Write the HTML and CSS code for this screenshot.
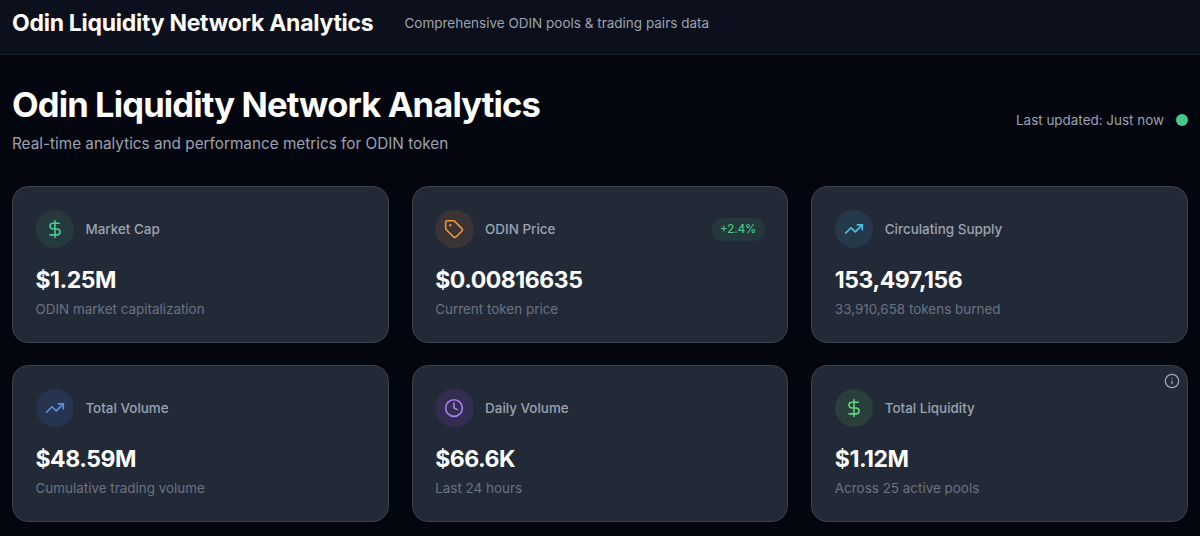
FILE: index.html
```html
<!DOCTYPE html>
<html lang="en">
<head>
    <meta charset="UTF-8">
    <title>Odin Liquidity Network Analytics</title>
    <link rel="stylesheet" href="styles.css">
</head>
<body>
    <header class="topbar">
        <div class="topbar-title">Odin Liquidity Network Analytics</div>
        <div class="topbar-sub">Comprehensive ODIN pools &amp; trading pairs data</div>
    </header>
    <main class="content">
        <div class="page-head">
            <div>
                <h1>Odin Liquidity Network Analytics</h1>
                <p class="lead">Real-time analytics and performance metrics for ODIN token</p>
            </div>
            <div class="status">
                <span>Last updated: Just now</span>
                <span class="status-dot"></span>
            </div>
        </div>
        <div class="cards">
            <div class="card">
                <div class="card-head">
                    <div class="icon icon-green">
                        <svg viewBox="0 0 24 24"><path d="M12 2v20"/><path d="M17 5H9.5a3.5 3.5 0 0 0 0 7h5a3.5 3.5 0 0 1 0 7H6"/></svg>
                    </div>
                    <div class="card-title">Market Cap</div>
                </div>
                <div class="value">$1.25M</div>
                <div class="note">ODIN market capitalization</div>
            </div>
            <div class="card">
                <div class="card-head">
                    <div class="icon icon-orange">
                        <svg viewBox="0 0 24 24"><path d="M12.586 2.586A2 2 0 0 0 11.172 2H4a2 2 0 0 0-2 2v7.172a2 2 0 0 0 .586 1.414l8.704 8.704a2.426 2.426 0 0 0 3.42 0l6.58-6.58a2.426 2.426 0 0 0 0-3.42z"/><circle cx="7.5" cy="7.5" r=".5"/></svg>
                    </div>
                    <div class="card-title">ODIN Price</div>
                    <div class="badge">+2.4%</div>
                </div>
                <div class="value">$0.00816635</div>
                <div class="note">Current token price</div>
            </div>
            <div class="card">
                <div class="card-head">
                    <div class="icon icon-cyan">
                        <svg viewBox="0 0 24 24"><path d="M22 7 13.5 15.5 8.5 10.5 2 17"/><path d="M16 7h6v6"/></svg>
                    </div>
                    <div class="card-title">Circulating Supply</div>
                </div>
                <div class="value">153,497,156</div>
                <div class="note">33,910,658 tokens burned</div>
            </div>
            <div class="card">
                <div class="card-head">
                    <div class="icon icon-blue">
                        <svg viewBox="0 0 24 24"><path d="M22 7 13.5 15.5 8.5 10.5 2 17"/><path d="M16 7h6v6"/></svg>
                    </div>
                    <div class="card-title">Total Volume</div>
                </div>
                <div class="value">$48.59M</div>
                <div class="note">Cumulative trading volume</div>
            </div>
            <div class="card">
                <div class="card-head">
                    <div class="icon icon-purple">
                        <svg viewBox="0 0 24 24"><circle cx="12" cy="12" r="10"/><path d="M12 6v6l4 2"/></svg>
                    </div>
                    <div class="card-title">Daily Volume</div>
                </div>
                <div class="value">$66.6K</div>
                <div class="note">Last 24 hours</div>
            </div>
            <div class="card">
                <svg class="info" viewBox="0 0 24 24"><circle cx="12" cy="12" r="10"/><path d="M12 16v-4"/><path d="M12 8h.01"/></svg>
                <div class="card-head">
                    <div class="icon icon-lime">
                        <svg viewBox="0 0 24 24"><path d="M12 2v20"/><path d="M17 5H9.5a3.5 3.5 0 0 0 0 7h5a3.5 3.5 0 0 1 0 7H6"/></svg>
                    </div>
                    <div class="card-title">Total Liquidity</div>
                </div>
                <div class="value">$1.12M</div>
                <div class="note">Across 25 active pools</div>
            </div>
        </div>
    </main>
</body>
</html>
```

FILE: styles.css
```css
html, body {
    margin: 0;
    padding: 0;
}
body {
    height: 536px;
    overflow: hidden;
    background-color: #03050f;
    color: #fff;
    font-family: Inter, "Liberation Sans", sans-serif;
}
.topbar {
    box-sizing: border-box;
    display: flex;
    align-items: center;
    gap: 31px;
    height: 55px;
    padding: 0 12px 9px;
    background-color: #0c101c;
    border-bottom: 1px solid #1c212d;
}
.topbar-title {
    font-size: 23px;
    font-weight: 700;
    letter-spacing: -0.27px;
}
.topbar-sub {
    font-size: 13.5px;
    color: #9ca3af;
}
.content {
    padding: 31px 12px 0;
}
.page-head {
    display: flex;
    justify-content: space-between;
    align-items: center;
    margin-bottom: 31px;
}
h1 {
    margin: 0 0 8px;
    font-size: 34.56px;
    line-height: 38px;
    font-weight: 700;
    letter-spacing: -0.87px;
}
.lead {
    margin: 0;
    font-size: 15.3px;
    line-height: 23px;
    color: #9ca3af;
}
.status {
    display: flex;
    align-items: center;
    gap: 12px;
    padding-bottom: 1px;
    font-size: 13.44px;
    color: #9ca3af;
}
.status-dot {
    width: 12px;
    height: 12px;
    border-radius: 50%;
    background-color: #48c78a;
}
.cards {
    display: grid;
    grid-template-columns: repeat(3, 1fr);
    gap: 22px 23px;
}
.card {
    position: relative;
    box-sizing: border-box;
    height: 157px;
    padding: 23px 22.5px;
    background-color: #222a38;
    border: 1px solid #3a4250;
    border-radius: 16px;
}
.card-head {
    display: flex;
    align-items: center;
    gap: 11.5px;
    margin-bottom: 16px;
}
.card-title {
    font-size: 13.44px;
    font-weight: 500;
    color: #9ca3af;
}
.icon {
    display: flex;
    align-items: center;
    justify-content: center;
    width: 38.4px;
    height: 38.4px;
    border-radius: 50%;
}
.icon svg, .info {
    fill: none;
    stroke: currentColor;
    stroke-linecap: round;
    stroke-linejoin: round;
}
.icon svg {
    width: 20px;
    height: 20px;
    stroke-width: 1.9;
}
.icon-green { background-color: #263a3e; color: #45cf8f; }
.icon-orange { background-color: #3a3436; color: #ec9a3c; }
.icon-cyan { background-color: #26394a; color: #45c6e6; }
.icon-blue { background-color: #27344f; color: #5b8fe8; }
.icon-purple { background-color: #332e50; color: #a77ef0; }
.icon-lime { background-color: #2a3e3b; color: #5fd97f; }
.badge {
    margin-left: auto;
    padding: 2.5px 8.5px;
    border-radius: 12px;
    background-color: #25393c;
    color: #4bc78a;
    font-size: 11.3px;
    font-weight: 500;
    line-height: 18px;
}
.value {
    font-size: 23px;
    line-height: 33px;
    font-weight: 700;
    letter-spacing: -0.45px;
}
.note {
    margin-top: 3px;
    font-size: 13.44px;
    line-height: 19px;
    color: #6b7280;
}
.info {
    position: absolute;
    top: 7px;
    right: 7px;
    width: 16px;
    height: 16px;
    color: #a3a9b3;
    stroke-width: 1.9;
}
```
